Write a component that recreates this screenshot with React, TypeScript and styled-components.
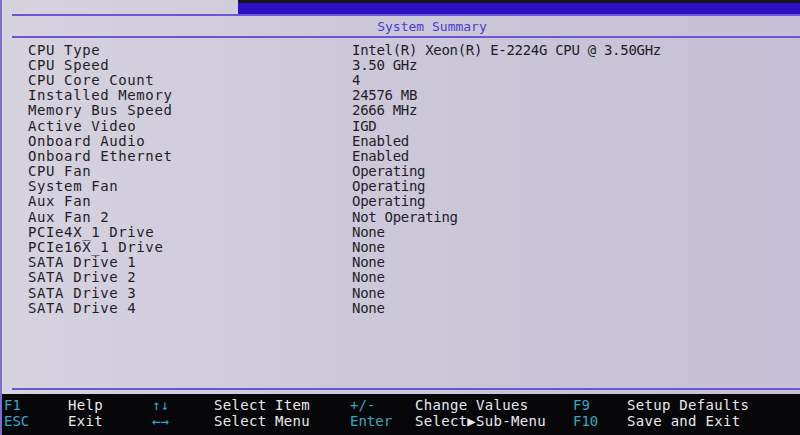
import styled, { createGlobalStyle } from 'styled-components';

const GlobalStyle = createGlobalStyle`
  html, body {
    margin: 0;
    padding: 0;
    background: #cdc8d9;
  }
  * {
    box-sizing: border-box;
  }
`;

const summary: [string, string][] = [
  ['CPU Type', 'Intel(R) Xeon(R) E-2224G CPU @ 3.50GHz'],
  ['CPU Speed', '3.50 GHz'],
  ['CPU Core Count', '4'],
  ['Installed Memory', '24576 MB'],
  ['Memory Bus Speed', '2666 MHz'],
  ['Active Video', 'IGD'],
  ['Onboard Audio', 'Enabled'],
  ['Onboard Ethernet', 'Enabled'],
  ['CPU Fan', 'Operating'],
  ['System Fan', 'Operating'],
  ['Aux Fan', 'Operating'],
  ['Aux Fan 2', 'Not Operating'],
  ['PCIe4X_1 Drive', 'None'],
  ['PCIe16X_1 Drive', 'None'],
  ['SATA Drive 1', 'None'],
  ['SATA Drive 2', 'None'],
  ['SATA Drive 3', 'None'],
  ['SATA Drive 4', 'None'],
];

// key hints, two per column
const hints: [string, string, string, string][] = [
  ['F1', 'Help', 'ESC', 'Exit'],
  ['\u2191\u2193', 'Select Item', '\u2190\u2192', 'Select Menu'],
  ['+/-', 'Change Values', 'Enter', 'Select\u25B6Sub-Menu'],
  ['F9', 'Setup Defaults', 'F10', 'Save and Exit'],
];

function App() {
  return (
    <>
      <GlobalStyle />
      <Screen>
        <Header>
          <HeaderGap />
          <TabBand />
        </Header>
        <Rule />
        <Title>System Summary</Title>
        <Rule />
        <Summary>
          {summary.map(([label, value]) => (
            <Row key={label}>
              <Label>{label}</Label>
              <Value>{value}</Value>
            </Row>
          ))}
        </Summary>
        <Rule />
        <Footer>
          {hints.map(([k1, d1, k2, d2]) => (
            <HintGroup key={k1}>
              <Key>{k1}</Key>
              <Desc>{d1}</Desc>
              <Key>{k2}</Key>
              <Desc>{d2}</Desc>
            </HintGroup>
          ))}
        </Footer>
      </Screen>
    </>
  );
}

export default App;

const Screen = styled.div`
  width: 800px;
  height: 435px;
  display: flex;
  flex-direction: column;
  overflow: hidden;
  background: linear-gradient(90deg, #d6d2de 0%, #cdc8d9 45%, #c6bfd7 100%);
  border-left: 2px solid #7d6fd2;
  font-family: 'DejaVu Sans Mono', 'Liberation Mono', monospace;
  color: #1f1e27;
`;

const Header = styled.div`
  height: 14px;
  display: flex;
`;

const HeaderGap = styled.div`
  width: 236px;
`;

const TabBand = styled.div`
  flex: 1;
  background: #2c10c6;
  border-top: 3px solid #15131c;
`;

const Rule = styled.div`
  height: 2px;
  margin-left: 10px;
  background: #6b56d4;
`;

const Title = styled.div`
  height: 20px;
  display: flex;
  align-items: center;
  justify-content: center;
  padding-left: 62px;
  font-size: 13px;
  color: #4b3ccf;
`;

const Summary = styled.div`
  flex: 1;
  display: flex;
  flex-direction: column;
  padding: 4px 0 0 26px;
`;

const Row = styled.div`
  height: 15.2px;
  display: grid;
  grid-template-columns: 324px 1fr;
  align-items: center;
  font-size: 14px;
  line-height: 14px;
  white-space: nowrap;
`;

const Label = styled.span`
  letter-spacing: 0.6px;
`;

const Value = styled.span`
  letter-spacing: -0.3px;
`;

const Footer = styled.div`
  height: 41px;
  margin-top: 4px;
  display: grid;
  grid-template-columns: 148px 198px 223px 1fr;
  align-content: start;
  padding: 3px 0 0 2px;
  background: #07070a;
  font-size: 14px;
  line-height: 16px;
  white-space: nowrap;
`;

const HintGroup = styled.div`
  display: grid;
  grid-template-columns: 64px 1fr;
  &:nth-child(2) {
    grid-template-columns: 62px 1fr;
  }
  &:nth-child(3) {
    grid-template-columns: 65px 1fr;
  }
  &:nth-child(4) {
    grid-template-columns: 54px 1fr;
  }
`;

const Key = styled.span`
  color: #35a9c2;
  &:nth-child(odd) {
    font-weight: 400;
  }
`;

const Desc = styled.span`
  color: #e9e8ef;
  letter-spacing: 0.3px;
`;
